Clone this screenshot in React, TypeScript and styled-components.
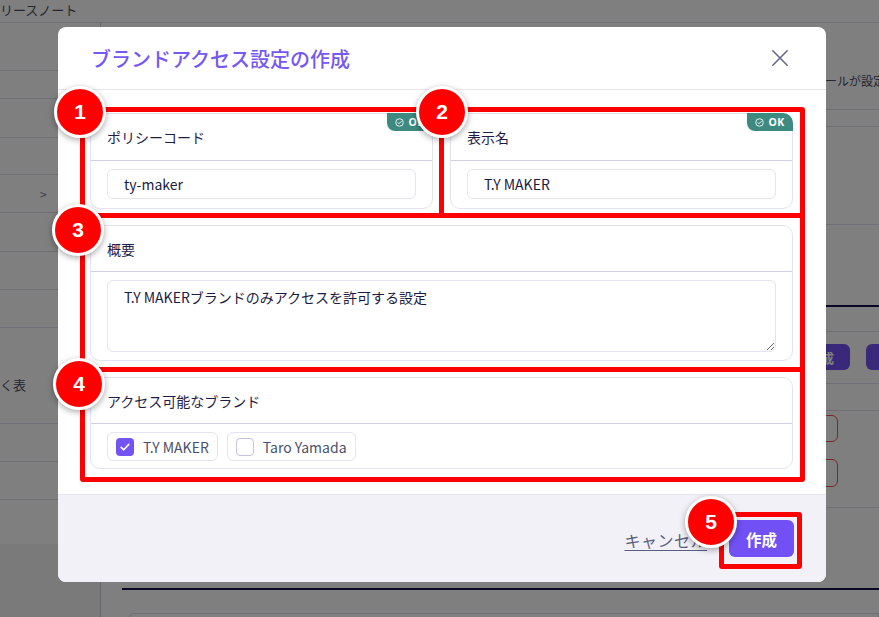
import React from "react";
import styled, { createGlobalStyle } from "styled-components";

const GlobalStyle = createGlobalStyle`
  html, body { margin: 0; padding: 0; }
  body {
    width: 879px;
    height: 617px;
    overflow: hidden;
    background: #ffffff;
    font-family: "Noto Sans CJK JP", "Noto Sans", sans-serif;
  }
  *, *::before, *::after { box-sizing: border-box; }
`;

/* ---------- background page ---------- */

const Page = styled.div`
  position: relative;
  width: 879px;
  height: 617px;
  overflow: hidden;
  background: #ffffff;
  display: flex;
  flex-direction: column;
`;

const TopBar = styled.div`
  height: 23px;
  flex: none;
  border-bottom: 1px solid #dcdce8;
  font-size: 13px;
  line-height: 20px;
  color: #4c4c64;
  white-space: nowrap;
`;

const PageBody = styled.div`
  flex: 1;
  display: flex;
  min-height: 0;
`;

const Sidebar = styled.nav`
  width: 101px;
  flex: none;
  display: flex;
  flex-direction: column;
  border-right: 1px solid #cfcfdc;
`;

const SideRow = styled.div<{ $h: number; $pl?: number; $pt?: number }>`
  height: ${(p) => p.$h}px;
  flex: none;
  border-bottom: 1px solid #dcdce8;
  display: flex;
  align-items: ${(p) => (p.$pt ? "flex-start" : "center")};
  padding-left: ${(p) => p.$pl ?? 0}px;
  padding-top: ${(p) => p.$pt ?? 0}px;
  font-size: 13px;
  color: #4c4c64;
  white-space: nowrap;
`;

const SideSpacer = styled.div`
  height: 44px;
  flex: none;
`;

const SideFooter = styled.div`
  flex: 1;
  background: #f4f4f5;
`;

const Chevron = styled.span`
  font-size: 12px;
  color: #7c7c90;
`;

const Main = styled.main`
  flex: 1;
  display: flex;
  flex-direction: column;
  min-width: 0;
  overflow: hidden;
`;

const Block = styled.div<{ $h: number; $navy?: boolean; $inset?: number }>`
  height: ${(p) => p.$h}px;
  flex: none;
  margin-left: ${(p) => p.$inset ?? 0}px;
  border-bottom: ${(p) => (p.$navy ? "2px solid #10104a" : "1px solid #dcdce8")};
  white-space: nowrap;
`;

const NoteText = styled.div`
  margin: 49px 0 0 712px;
  font-size: 12px;
  line-height: 18px;
  color: #4c4c64;
`;

const BgButtonRow = styled.div`
  display: flex;
  gap: 16px;
  padding: 12px 0 0 649px;
`;

const BgButton = styled.span`
  flex: none;
  width: 100px;
  height: 26px;
  border-radius: 6px;
  background: #7553f6;
  color: #ffffff;
  font-size: 13px;
  font-weight: 700;
  display: flex;
  align-items: center;
  justify-content: flex-end;
  padding-right: 16px;
`;

const OutlineStack = styled.div`
  display: flex;
  flex-direction: column;
  gap: 17px;
  padding: 4px 0 0 659px;
`;

const OutlineBox = styled.span<{ $h: number }>`
  flex: none;
  width: 78px;
  height: ${(p) => p.$h}px;
  border: 1px solid #e85656;
  border-radius: 6px;
`;

const TableTop = styled.div`
  flex: none;
  margin: 23px 0 0 27px;
  height: 40px;
  border: 1px solid #dcdce8;
  border-radius: 6px 0 0 0;
`;

/* ---------- overlay & dialog ---------- */

const Overlay = styled.div`
  position: absolute;
  inset: 0;
  background: rgba(0, 0, 0, 0.5);
  padding: 27px 0 0 58px;
`;

const DialogFrame = styled.div`
  position: relative;
  width: 768px;
`;

const Dialog = styled.div`
  background: #ffffff;
  border-radius: 8px;
`;

const Header = styled.header`
  height: 63px;
  padding: 2px 38px 0 33px;
  display: flex;
  align-items: center;
  justify-content: space-between;
  border-bottom: 1px solid #e6e5f1;
`;

const Title = styled.h2`
  margin: 0;
  font-size: 20px;
  font-weight: 500;
  line-height: 1;
  color: #7658f2;
`;

const CloseButton = styled.button`
  width: 16px;
  height: 16px;
  padding: 0;
  border: none;
  background: none;
  display: flex;
  margin-top: -3px;
`;

const Body = styled.div`
  padding: 23px 33px 25px 32px;
  display: grid;
  grid-template-columns: 1fr 1fr;
  gap: 16px 17px;
`;

const Card = styled.section<{ $wide?: boolean }>`
  position: relative;
  grid-column: ${(p) => (p.$wide ? "1 / -1" : "auto")};
  border: 1px solid #e3e2f2;
  border-radius: 10px;
  background: #ffffff;
`;

const CardHead = styled.div<{ $h: number }>`
  height: ${(p) => p.$h}px;
  padding: 0 16px;
  display: flex;
  align-items: center;
  border-bottom: 1px solid #d0d1e6;
  font-size: 14px;
  color: #1f1d47;
`;

const CardContent = styled.div<{ $pb: number }>`
  padding: 8px 16px ${(p) => p.$pb}px;
`;

const TextInput = styled.input`
  display: block;
  width: 100%;
  height: 30px;
  padding: 0 16px;
  border: 1px solid #e4e3f2;
  border-radius: 6px;
  background: #ffffff;
  font-family: inherit;
  font-size: 14px;
  color: #1b1a40;
  outline: none;
`;

const TextArea = styled.textarea`
  display: block;
  width: 100%;
  height: 72px;
  padding: 6px 16px;
  border: 1px solid #e4e3f2;
  border-radius: 6px;
  background: #ffffff;
  font-family: inherit;
  font-size: 14px;
  line-height: 20px;
  color: #1b1a40;
  resize: vertical;
  outline: none;
`;

const OkBadge = styled.span`
  position: absolute;
  top: -1px;
  right: -1px;
  width: 46px;
  height: 18px;
  display: flex;
  align-items: center;
  justify-content: center;
  gap: 4px;
  background: #3d8a81;
  color: #ffffff;
  border-radius: 0 10px 0 8px;
  font-family: "Noto Sans", sans-serif;
  font-size: 10.5px;
  font-weight: 700;
  letter-spacing: 0.4px;
`;

const ChipRow = styled.div`
  display: flex;
  gap: 9px;
`;

const Chip = styled.label`
  display: inline-flex;
  align-items: center;
  gap: 9px;
  height: 29px;
  padding: 0 8px;
  border: 1px solid #e4e3f1;
  border-radius: 6px;
  font-size: 14px;
  color: #4b4f6b;
`;

const CheckBox = styled.span<{ $checked: boolean }>`
  width: 18px;
  height: 18px;
  border-radius: 4px;
  display: flex;
  align-items: center;
  justify-content: center;
  background: ${(p) => (p.$checked ? "#7353f4" : "#ffffff")};
  border: ${(p) => (p.$checked ? "none" : "1.5px solid #c3c4da")};
`;

const Footer = styled.footer`
  height: 88px;
  border-top: 1px solid #e6e5f1;
  background: #f2f1f7;
  border-radius: 0 0 8px 8px;
  display: flex;
  align-items: center;
  justify-content: flex-end;
  gap: 22px;
  padding: 0 32px;
`;

const CancelLink = styled.a`
  font-size: 16px;
  letter-spacing: 0.5px;
  color: #5a5e7e;
  text-decoration: underline;
  text-underline-offset: 3px;
  margin-top: 3px;
`;

const PrimaryButton = styled.button`
  height: 37px;
  width: 65px;
  padding: 0;
  border: none;
  border-radius: 6px;
  background: #7150f5;
  color: #ffffff;
  font-family: inherit;
  font-size: 15.5px;
  font-weight: 700;
`;

/* ---------- annotations ---------- */

const Frame = styled.div<{ $x: number; $y: number; $w: number; $h: number }>`
  position: absolute;
  left: ${(p) => p.$x}px;
  top: ${(p) => p.$y}px;
  width: ${(p) => p.$w}px;
  height: ${(p) => p.$h}px;
  border: 5px solid #ff0000;
  border-radius: 3px;
  pointer-events: none;
`;

const Marker = styled.div<{ $x: number; $y: number }>`
  position: absolute;
  left: ${(p) => p.$x}px;
  top: ${(p) => p.$y}px;
  width: 52px;
  height: 52px;
  border-radius: 50%;
  background: #ff0000;
  border: 3px solid #ffffff;
  box-shadow: 0 2px 6px rgba(0, 0, 0, 0.35);
  display: flex;
  align-items: center;
  justify-content: center;
  color: #ffffff;
  font-family: "Liberation Sans", Arial, sans-serif;
  font-size: 21px;
  font-weight: 700;
`;

const CheckMark = () => (
  <svg width="12" height="12" viewBox="0 0 12 12" fill="none">
    <path d="M2.2 6.3 L4.8 8.8 L9.8 3.4" stroke="#fff" strokeWidth="1.6" strokeLinecap="round" strokeLinejoin="round" />
  </svg>
);

const OkIcon = () => (
  <svg width="9" height="9" viewBox="0 0 10 10" fill="none">
    <circle cx="5" cy="5" r="4.2" stroke="#fff" strokeWidth="1" />
    <path d="M3.2 5.1 L4.5 6.4 L6.9 3.8" stroke="#fff" strokeWidth="1" strokeLinecap="round" strokeLinejoin="round" />
  </svg>
);

const CloseIcon = () => (
  <svg width="16" height="16" viewBox="0 0 16 16" fill="none">
    <path d="M0.8 0.8 L15.2 15.2 M15.2 0.8 L0.8 15.2" stroke="#62648a" strokeWidth="1.5" strokeLinecap="round" />
  </svg>
);

const frames = [
  { x: 22, y: 80, w: 364, h: 111 },
  { x: 381, y: 80, w: 366, h: 111 },
  { x: 22, y: 186, w: 725, h: 159 },
  { x: 22, y: 340, w: 725, h: 115 },
  { x: 661, y: 485, w: 83, h: 57 },
];

const markers = [
  { n: 1, x: -4, y: 59 },
  { n: 2, x: 358, y: 59 },
  { n: 3, x: -6, y: 177 },
  { n: 4, x: -5, y: 331 },
  { n: 5, x: 627, y: 469 },
];

export default function App() {
  return (
    <>
      <GlobalStyle />
      <Page>
        <TopBar>リースノート</TopBar>
        <PageBody>
          <Sidebar>
            <SideRow $h={48} />
            <SideRow $h={28} />
            <SideRow $h={39} />
            <SideRow $h={37} />
            <SideRow $h={38} $pl={40}>
              <Chevron>&gt;</Chevron>
            </SideRow>
            <SideRow $h={39} />
            <SideRow $h={38} />
            <SideRow $h={38} />
            <SideRow $h={96} $pt={47}>
              く表
            </SideRow>
            <SideRow $h={38} />
            <SideRow $h={38} />
            <SideSpacer />
            <SideFooter />
          </Sidebar>
          <Main>
            <Block $h={87}>
              <NoteText>ロールが設定</NoteText>
            </Block>
            <Block $h={17} />
            <Block $h={98} />
            <Block $h={82} $navy $inset={21} />
            <Block $h={25} />
            <Block $h={52}>
              <BgButtonRow>
                <BgButton>作成</BgButton>
                <BgButton>追加</BgButton>
              </BgButtonRow>
            </Block>
            <Block $h={27} />
            <Block $h={97}>
              <OutlineStack>
                <OutlineBox $h={27} />
                <OutlineBox $h={28} />
              </OutlineStack>
            </Block>
            <Block $h={82} $navy $inset={21} />
            <TableTop />
          </Main>
        </PageBody>

        <Overlay>
          <DialogFrame>
            <Dialog>
              <Header>
                <Title>ブランドアクセス設定の作成</Title>
                <CloseButton aria-label="閉じる">
                  <CloseIcon />
                </CloseButton>
              </Header>
              <Body>
                <Card>
                  <OkBadge>
                    <OkIcon />
                    OK
                  </OkBadge>
                  <CardHead $h={47}>ポリシーコード</CardHead>
                  <CardContent $pb={9}>
                    <TextInput defaultValue="ty-maker" />
                  </CardContent>
                </Card>
                <Card>
                  <OkBadge>
                    <OkIcon />
                    OK
                  </OkBadge>
                  <CardHead $h={47}>表示名</CardHead>
                  <CardContent $pb={9}>
                    <TextInput defaultValue="T.Y MAKER" />
                  </CardContent>
                </Card>
                <Card $wide>
                  <CardHead $h={46}>概要</CardHead>
                  <CardContent $pb={8}>
                    <TextArea defaultValue="T.Y MAKERブランドのみアクセスを許可する設定" />
                  </CardContent>
                </Card>
                <Card $wide>
                  <CardHead $h={46}>アクセス可能なブランド</CardHead>
                  <CardContent $pb={7}>
                    <ChipRow>
                      <Chip>
                        <CheckBox $checked>
                          <CheckMark />
                        </CheckBox>
                        T.Y MAKER
                      </Chip>
                      <Chip>
                        <CheckBox $checked={false} />
                        Taro Yamada
                      </Chip>
                    </ChipRow>
                  </CardContent>
                </Card>
              </Body>
              <Footer>
                <CancelLink>キャンセル</CancelLink>
                <PrimaryButton>作成</PrimaryButton>
              </Footer>
            </Dialog>
            {frames.map((f, i) => (
              <Frame key={i} $x={f.x} $y={f.y} $w={f.w} $h={f.h} />
            ))}
            {markers.map((m) => (
              <Marker key={m.n} $x={m.x} $y={m.y}>
                {m.n}
              </Marker>
            ))}
          </DialogFrame>
        </Overlay>
      </Page>
    </>
  );
}
